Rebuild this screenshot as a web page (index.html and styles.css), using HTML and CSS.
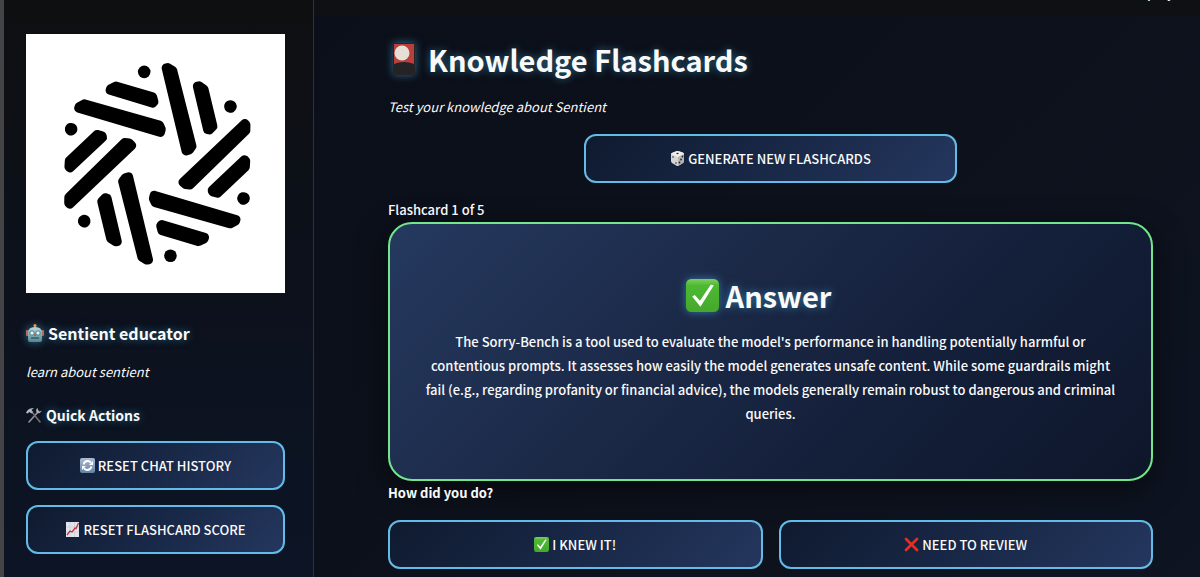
FILE: index.html
```html
<!DOCTYPE html>
<html lang="en">
<head>
<meta charset="utf-8">
<title>Knowledge Flashcards</title>
<link rel="stylesheet" href="styles.css">
</head>
<body>
<svg class="defs" aria-hidden="true">
  <defs>
    <linearGradient id="green" x1="0" y1="0" x2="0" y2="1"><stop offset="0" stop-color="#7fcf5e"/><stop offset=".2" stop-color="#4db934"/><stop offset="1" stop-color="#45a82c"/></linearGradient>
    <linearGradient id="steel" x1="0" y1="0" x2="0" y2="1"><stop offset="0" stop-color="#a9bdd3"/><stop offset="1" stop-color="#6483a6"/></linearGradient>
    <linearGradient id="metal" x1="0" y1="0" x2="0" y2="1"><stop offset="0" stop-color="#b9d8dd"/><stop offset="1" stop-color="#55858f"/></linearGradient>
    <symbol id="check" viewBox="0 0 32 32">
      <rect width="32" height="32" rx="5" fill="url(#green)"/>
      <path d="M6 17 8.500 15.500 13.500 21 24 5.500 27 6 14 27Z" fill="#fff"/>
    </symbol>
    <g id="arm">
      <circle cx="433" cy="214" r="19" stroke="none"/>
      <path d="M499 202 504 201 519 210 577 438 569 449 559 452Z"/>
      <path d="M593 257 598 256 613 266 640 378 629 389 624 388Z"/>
    </g>
  </defs>
</svg>
<div class="page">
  <aside class="sidebar">
    <svg class="logo" viewBox="77 100 780 780" role="img" aria-label="Sentient logo">
      <rect x="77" y="100" width="780" height="780" fill="#fff"/>
      <g fill="#000" stroke="#000" stroke-width="27" stroke-linejoin="round">
        <use href="#arm"/>
        <use href="#arm" transform="rotate(60 472.500 491)"/>
        <use href="#arm" transform="rotate(120 472.500 491)"/>
        <use href="#arm" transform="rotate(180 472.500 491)"/>
        <use href="#arm" transform="rotate(240 472.500 491)"/>
        <use href="#arm" transform="rotate(300 472.500 491)"/>
      </g>
    </svg>
    <h2 class="brand">
      <svg class="icon icon-brand" viewBox="0 0 18 18" aria-hidden="true">
        <rect y="6" width="3" height="6" rx="1" fill="#b56b65"/><rect x="15" y="6" width="3" height="6" rx="1" fill="#b56b65"/>
        <path d="M8.500 2h1v3h-1z" fill="#aaa"/><circle cx="9" cy="1.500" r="1.500" fill="#f09a55"/>
        <path d="M2 9Q2 3 9 3t7 6v7q0 2-2 2H4q-2 0-2-2Z" fill="url(#metal)"/>
        <circle cx="6" cy="9" r="2.200" fill="#dffaff" stroke="#427d8b"/><circle cx="12" cy="9" r="2.200" fill="#dffaff" stroke="#427d8b"/>
        <path d="m9 9 1.500 3h-3Z" fill="#c25e55"/><path d="M5 14h8" stroke="#315e68" stroke-width="1.500"/>
      </svg>
      Sentient educator
    </h2>
    <p class="tagline"><em>learn about sentient</em></p>
    <h3 class="section">
      <svg class="icon icon-tools" viewBox="0 0 17 17" aria-hidden="true">
        <path d="m3 15 9-10" stroke="#8f949b" stroke-width="1.600" stroke-linecap="round"/>
        <path d="M11.500 1q-2.500 2-.5 5 3 1 5-2.500l-2.500 1-1.200-1.200Z" fill="#aab0b7"/>
        <path d="m6 5 8 10" stroke="#77706f" stroke-width="1.600" stroke-linecap="round"/>
        <path d="M0 6 1 4q2-3 7-3L5.500 3 7 5 5.500 6.500 3.500 5 1.500 6.500Z" fill="#b4bac0"/>
      </svg>
      Quick Actions
    </h3>
    <div class="actions">
      <button class="btn" type="button">
        <svg class="icon icon-small" viewBox="0 0 15 15" aria-hidden="true">
          <rect width="15" height="15" rx="2" fill="url(#steel)"/>
          <path d="M3.500 6.500q1-3.500 4-3.500 2 0 3.500 1.700M11.500 8.500q-1 3.500-4 3.500-2 0-3.500-1.700" fill="none" stroke="#fff" stroke-width="1.800"/>
          <path d="M13 3v4H9ZM2 12V8h4Z" fill="#fff"/>
        </svg>
        RESET CHAT HISTORY
      </button>
      <button class="btn" type="button">
        <svg class="icon icon-small" viewBox="0 0 15 15" aria-hidden="true">
          <path d="M1 0h13v15H1Z" fill="#e1e5eb"/><path d="M5 0v15M9.500 0v15M1 5h13M1 10h13" stroke="#bdc6d2" stroke-width=".6"/>
          <path d="m2 13 3-4 2 1 3-4 1 .5L13.500 1" fill="none" stroke="#c52f3d" stroke-width="1.300"/>
        </svg>
        RESET FLASHCARD SCORE
      </button>
    </div>
  </aside>
  <div class="content">
    <header class="toolbar"><span class="deploy">Deploy</span></header>
    <main class="main">
      <h1 class="title">
        <svg class="icon icon-title" viewBox="0 0 32 34" aria-hidden="true">
          <path d="M5 1h22v32H5Z" fill="#242325"/><path d="M6 2h20v20q-10-4-20 0Z" fill="#b83f3c"/><circle cx="14" cy="11" r="7.500" fill="#e7dfd6"/>
        </svg>
        Knowledge Flashcards
      </h1>
      <p class="lead"><em>Test your knowledge about Sentient</em></p>
      <div class="generate">
        <button class="btn" type="button">
          <svg class="icon icon-small" viewBox="0 0 15 15" aria-hidden="true">
            <path d="M1 3Q1 2 3 1.500L7 0q1 0 5 1.200Q14 2 14 3v7q0 1-1 2l-5 3H7l-5-3q-1-1-1-2Z" fill="#d6d5d3"/>
            <path d="M1 3q0-1 2-1.500L7 0q1 0 5 1.200Q14 2 14 3L8 6Z" fill="#f0eeeb"/><path d="m8 6 6-3v7q0 1-1 2l-5 3Z" fill="#b4b3b2"/>
            <g fill="#29292a"><ellipse cx="7.500" cy="2.500" rx="1.200" ry=".7"/><circle cx="3" cy="6" r=".8"/><circle cx="6" cy="12" r=".8"/><circle cx="12.500" cy="5.500" r=".9"/><circle cx="11" cy="8.500" r=".9"/><circle cx="9.500" cy="11.500" r=".9"/></g>
          </svg>
          GENERATE NEW FLASHCARDS
        </button>
      </div>
      <p class="counter">Flashcard 1 of 5</p>
      <section class="card">
        <h2 class="answer"><svg class="icon icon-answer" aria-hidden="true"><use href="#check"/></svg> Answer</h2>
        <p class="explain">The Sorry-Bench is a tool used to evaluate the model's performance in handling potentially harmful or contentious prompts. It assesses how easily the model generates unsafe content. While some guardrails might fail (e.g., regarding profanity or financial advice), the models generally remain robust to dangerous and criminal queries.</p>
      </section>
      <p class="question"><strong>How did you do?</strong></p>
      <div class="choices">
        <button class="btn" type="button"><svg class="icon icon-small" aria-hidden="true"><use href="#check"/></svg> I KNEW IT!</button>
        <button class="btn" type="button">
          <svg class="icon icon-small" viewBox="0 0 15 15" aria-hidden="true"><path d="m2 2 11 11M13 2 2 13" stroke="#df3025" stroke-width="2.800" stroke-linecap="round"/></svg>
          NEED TO REVIEW
        </button>
      </div>
    </main>
  </div>
</div>
</body>
</html>
```
FILE: styles.css
```css
* { box-sizing: border-box; }

body {
  margin: 0;
  background: #0c111c;
  color: #fafafa;
  font: 500 13px/24px "Noto Sans CJK SC", "Noto Sans", sans-serif;
}

h1, h2, h3, p { margin: 0; }
em { font-weight: 400; }

.defs { position: absolute; width: 0; height: 0; }

.page { display: flex; min-height: 100vh; border-left: 4px solid #444446; }

.sidebar {
  flex: 0 0 310px;
  padding: 34px 28px 0 22px;
  border-right: 1px solid #193b49;
  background: linear-gradient(#0e0f11 0, #0c111c 50%, #0c1526 100%);
}

.logo { display: block; width: 100%; }

.icon { flex: none; }
.icon-small { width: 15px; height: 15px; }
.icon-brand { width: 18px; height: 18px; }
.icon-tools { width: 17px; height: 17px; }
.icon-title { width: 32px; height: 34px; }
.icon-answer { width: 33px; height: 33px; }

.brand, .section, .title, .answer {
  display: flex;
  align-items: center;
  font-weight: 700;
  text-shadow: 0 0 9px rgba(79, 195, 247, .5);
}
.brand .icon, .title .icon, .answer .icon { filter: drop-shadow(0 0 4px rgba(79, 195, 247, .5)); }

.brand { gap: 4px; margin-top: 28px; font-size: 16px; }
.tagline { margin-top: 15px; }
.section { gap: 3px; margin-top: 19px; font-size: 14px; }

.actions { display: grid; gap: 15px; margin-top: 14px; }

.btn {
  display: flex;
  align-items: center;
  justify-content: center;
  gap: 3px;
  width: 100%;
  height: 49px;
  padding: 0 12px;
  border: 2px solid #62bce7;
  border-radius: 12px;
  background: linear-gradient(135deg, #0f1a2e, #172644 45%, #25375f) border-box;
  color: #fafafa;
  font: inherit;
}

.content {
  flex: 1;
  min-width: 0;
  background: linear-gradient(135deg, #0b0f19, #0d111b 50%, #0d1422);
}

.toolbar {
  display: flex;
  align-items: flex-end;
  justify-content: flex-end;
  height: 16px;
  padding: 0 26px 15px 0;
  overflow: hidden;
  background: #0e1014;
  line-height: 16px;
}

.main { padding: 21px 47px 8px 74px; }

.title { gap: 8px; font-size: 29px; line-height: 44px; }
.lead { margin-top: 14px; }

.generate { display: grid; grid-template-columns: 1fr 2fr 1fr; gap: 10px; margin-top: 15px; }
.generate .btn { grid-column: 2; }

.counter { margin-top: 15px; }

.card {
  padding: 49px 35px 53px;
  border: 2px solid #75e58d;
  border-radius: 24px;
  background: linear-gradient(135deg, #25395f, #1b2947 40%, #131e38 70%, #0e1629) border-box;
  box-shadow: 0 8px 30px rgba(0, 0, 0, .5);
  text-align: center;
}
.answer { justify-content: center; gap: 7px; padding-right: 24px; font-size: 29px; line-height: 44px; }
.explain { margin-top: 13px; }

.question { position: relative; }
.choices { display: grid; grid-template-columns: 1fr 1fr; gap: 16px; margin-top: 15px; position: relative; }
```
